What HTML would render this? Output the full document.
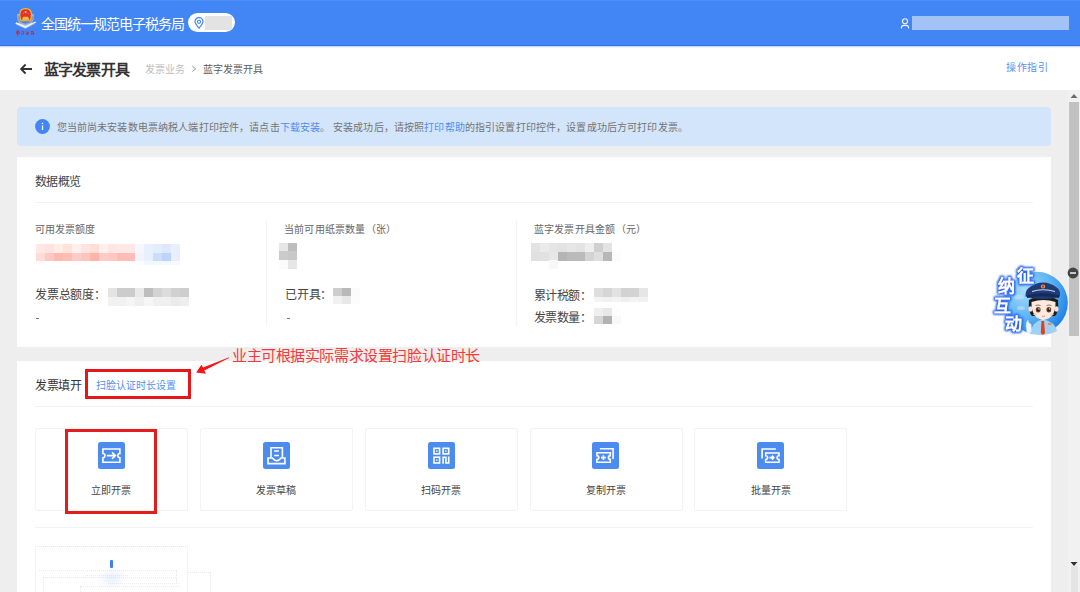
<!DOCTYPE html>
<html lang="zh-CN"><head><meta charset="utf-8">
<style>
*{margin:0;padding:0;box-sizing:border-box}
html,body{width:1080px;height:592px;overflow:hidden;background:#eeeeee;font-family:"Liberation Sans",sans-serif;color:#333}
.abs{position:absolute}
.t{position:absolute;white-space:nowrap;line-height:1}
#hdr{position:absolute;left:0;top:0;width:1080px;height:46px;background:#4285f4;border-bottom:1px solid #2e75ec}
#hdr:before{content:"";position:absolute;left:0;top:0;width:100%;height:1px;background:#4f8df5}
#bar{position:absolute;left:0;top:46px;width:1080px;height:44px;background:#fff}
#sb{position:absolute;left:1068px;top:90px;width:12px;height:502px;background:#f1f1f1}
#thumb{position:absolute;left:1069px;top:102px;width:10px;height:234px;background:#c1c1c1}
.card{position:absolute;background:#fff}
.notice{position:absolute;left:17px;top:107px;width:1034px;height:39px;background:#d3e5fa;border-radius:4px}
.hr{position:absolute;height:1px;background:#f2f2f2}
.vr{position:absolute;width:1px;background:#f4f4f4}
.tile{position:absolute;top:428px;width:153px;height:83px;border:1px solid #f2f3f5;border-radius:2px;background:#fff}
.ico{position:absolute;left:63px;top:14px;width:27px;height:27px;border-radius:3px;background:#4d8cf5}
.tl{position:absolute;left:0;width:100%;top:57px;text-align:center;font-size:10px;color:#333;line-height:1}
.mos{position:absolute}
.mos i{position:absolute;display:block}
</style></head><body>
<!-- header -->
<div id="hdr"></div>
<div id="bar"></div>
<div class="abs" style="left:0;top:46px;width:1080px;height:1px;background:#c6d8fa"></div><div class="abs" style="left:0;top:47px;width:1080px;height:1px;background:#f1f5fe"></div>
<svg class="abs" style="left:0;top:0" width="40" height="40" viewBox="0 0 40 40">
  <path d="M17.2 13.5 Q16.2 21.5 21 24.5 L25.5 25.8 L30 24.5 Q34.8 21.5 33.8 13.5 L31.8 14.2 Q32.4 20.4 29 22.8 L25.5 23.8 L22 22.8 Q18.6 20.4 19.2 14.2 Z" fill="#aab0bb"/>
  <path d="M18 16 Q18.5 20 21 22.5 M33 16 Q32.5 20 30 22.5" stroke="#7c838f" stroke-width="0.6" fill="none"/>
  <path d="M19.3 14.3 Q19.3 8 25.6 8 Q31.9 8 31.9 14.3 Q31.9 18.8 30.6 21.2 L20.6 21.2 Q19.3 18.8 19.3 14.3 Z" fill="#efbd3a"/>
  <path d="M20.4 14.3 Q20.4 9.3 25.6 9.3 Q30.8 9.3 30.8 14.3 Q30.8 18 29.8 20.2 L21.4 20.2 Q20.4 18 20.4 14.3 Z" fill="#e2332b"/>
  <path d="M22.3 20.2 L22.3 18.2 L23.6 16.8 L27.6 16.8 L28.9 18.2 L28.9 20.2 Z" fill="#f0c04a"/>
  <rect x="21.4" y="19.6" width="8.4" height="1" fill="#e9a93a"/>
  <circle cx="25.6" cy="12" r="1" fill="#f4cf55"/>
  <circle cx="23.2" cy="13.3" r="0.45" fill="#f4cf55"/><circle cx="28" cy="13.3" r="0.45" fill="#f4cf55"/>
  <path d="M15.3 23.8 L25.4 28.2 L36.3 22.3 L35.4 21.4 L25.4 25.8 L16.4 22.2 Z" fill="#eef1f7"/>
  <path d="M16.6 24.4 L25.4 28.4 L35.2 23.4" stroke="#c5ccd8" stroke-width="0.6" fill="none"/>
  <path d="M17.9 29.8 L17.9 36 M16.6 31.6 L19.3 31.6 L19.3 33.4 L16.6 33.4 Z" stroke="#c9232b" stroke-width="0.8" fill="none"/>
  <path d="M21.5 31.5 Q22.5 31 23.5 31.6 L23.6 34.6 M21.8 32.6 L21.6 35" stroke="#c9232b" stroke-width="0.7" fill="none"/>
  <path d="M25.8 31.2 L26.5 34.8 M27.6 31.3 L27.4 35 M28.6 32 L28.7 34.4" stroke="#c9232b" stroke-width="0.7"/>
  <path d="M30.5 31.6 L33.8 31.4 M31 33.6 L34 33.4 M32 31 L31.8 35 M33.5 32 L33.6 35" stroke="#c9232b" stroke-width="0.7"/>
</svg>
<div class="t" style="left:40.5px;top:16.5px;font-size:14px;letter-spacing:-1px;color:#fff">全国统一规范电子税务局</div>
<div class="abs" style="left:188px;top:12.5px;width:47px;height:19.5px;border-radius:10px;background:#fff"></div>
<svg class="abs" style="left:194px;top:17px" width="10" height="12" viewBox="0 0 10 12">
  <path d="M5 11.2 C2.2 8 1 6.2 1 4.6 A4 4 0 0 1 9 4.6 C9 6.2 7.8 8 5 11.2 Z" fill="none" stroke="#4285f4" stroke-width="1.2"/>
  <circle cx="5" cy="4.8" r="1.6" fill="none" stroke="#4285f4" stroke-width="1.1"/>
</svg>
<div class="abs" style="left:205px;top:16px;width:26.5px;height:14px;background:#e3e3e3"></div>
<svg class="abs" style="left:900px;top:18px" width="10" height="11" viewBox="0 0 10 11">
  <circle cx="5" cy="3.3" r="2.5" fill="none" stroke="#f4f8ff" stroke-width="1.1"/>
  <path d="M1.4 10.6 V9.8 Q1.4 7.4 4 7.4 H6 Q8.6 7.4 8.6 9.8 V10.6" fill="none" stroke="#f4f8ff" stroke-width="1.1"/>
</svg>
<div class="abs" style="left:912.2px;top:16px;width:156.8px;height:14px;background:#a3c2f6"></div>
<!-- second bar -->
<svg class="abs" style="left:19px;top:62.6px" width="14" height="12" viewBox="0 0 14 12">
  <path d="M13 6 H2.2 M6.6 1.5 L2.1 6 L6.6 10.5" fill="none" stroke="#333" stroke-width="1.8"/>
</svg>
<div class="t" style="left:43.5px;top:61.5px;font-size:15px;font-weight:bold;color:#333;letter-spacing:-0.75px">蓝字发票开具</div>
<div class="t" style="left:145px;top:64.5px;font-size:10px;color:#bdbdbd">发票业务</div>
<svg class="abs" style="left:191px;top:64px" width="6" height="9" viewBox="0 0 6 9"><path d="M1.3 2.1 L4.6 4.85 L1.3 7.6" fill="none" stroke="#999" stroke-width="1"/></svg>
<div class="t" style="left:202.5px;top:64.5px;font-size:10px;color:#5c5c5c">蓝字发票开具</div>
<div class="t" style="left:1006px;top:63px;font-size:10px;letter-spacing:0.6px;color:#5a90ee">操作指引</div>
<div id="sb"></div>
<div id="thumb"></div>
<svg class="abs" style="left:1070px;top:93px" width="8" height="6" viewBox="0 0 8 6"><path d="M0.5 5 L4 1 L7.5 5 Z" fill="#6b6b6b"/></svg>
<svg class="abs" style="left:1070px;top:561px" width="8" height="6" viewBox="0 0 8 6"><path d="M0.5 1 L4 5 L7.5 1 Z" fill="#333"/></svg>
<div class="abs" style="left:1071px;top:566px;width:7px;height:26px;background:#e4e4e4"></div>

<!-- notice -->
<div class="notice"></div>
<svg class="abs" style="left:35.1px;top:119px" width="15" height="15" viewBox="0 0 15 15"><circle cx="7.5" cy="7.5" r="7.4" fill="#4285f4"/><rect x="6.85" y="6.4" width="1.35" height="4.6" fill="#f2f6fe"/><rect x="6.85" y="3.8" width="1.35" height="1.3" fill="#f2f6fe"/></svg>
<div class="t" style="left:56.5px;top:123px;font-size:10px;letter-spacing:0.145px;color:#747474">您当前尚未安装数电票纳税人端打印控件，请点击<span style="color:#4d8df2">下载安装</span>。<span style="display:inline-block;width:2.5px"></span>安装成功后，请按照<span style="color:#4d8df2">打印帮助</span>的指引设置打印控件，设置成功后方可打印发票。</div>
<div class="card" style="left:17px;top:157px;width:1034px;height:190px"></div>
<div class="t" style="left:34.5px;top:175.5px;font-size:12px;letter-spacing:-0.4px;color:#444">数据概览</div>
<div class="hr" style="left:35px;top:202px;width:998px"></div>
<div class="vr" style="left:266px;top:220px;height:106px"></div>
<div class="vr" style="left:516px;top:220px;height:106px"></div>
<div class="t" style="left:34.5px;top:224.5px;font-size:10px;color:#666">可用发票额度</div>
<div class="t" style="left:284px;top:224.5px;font-size:10px;letter-spacing:0.2px;color:#666">当前可用纸票数量（张）</div>
<div class="t" style="left:533.5px;top:224.5px;font-size:10px;letter-spacing:0.25px;color:#666">蓝字发票开具金额（元）</div>
<div class="t" style="left:35px;top:289px;font-size:12px;letter-spacing:-0.2px;color:#444">发票总额度：</div>
<div class="t" style="left:285px;top:289px;font-size:12px;letter-spacing:-0.2px;color:#444">已开具：</div>
<div class="t" style="left:533.8px;top:289.5px;font-size:12px;letter-spacing:-0.5px;color:#444">累计税额：</div>
<div class="t" style="left:533.8px;top:311.5px;font-size:12px;letter-spacing:-0.5px;color:#444">发票数量：</div>
<div class="abs" style="left:35.5px;top:317.5px;width:3px;height:1px;background:#777"></div>
<div class="abs" style="left:286.5px;top:317.5px;width:3px;height:1px;background:#777"></div>
<div class="mos" style="left:36px;top:244px"><i style="left:0px;top:0.0px;width:9.3px;height:8.8px;background:#ffe8e4"></i><i style="left:9px;top:0.0px;width:9.3px;height:8.8px;background:#ffe3de"></i><i style="left:18px;top:0.0px;width:9.3px;height:8.8px;background:#ffede6"></i><i style="left:27px;top:0.0px;width:9.3px;height:8.8px;background:#ffe2dc"></i><i style="left:36px;top:0.0px;width:9.3px;height:8.8px;background:#fff0ee"></i><i style="left:45px;top:0.0px;width:9.3px;height:8.8px;background:#ffe3e0"></i><i style="left:54px;top:0.0px;width:9.3px;height:8.8px;background:#ffdeda"></i><i style="left:63px;top:0.0px;width:9.3px;height:8.8px;background:#fff0ee"></i><i style="left:72px;top:0.0px;width:9.3px;height:8.8px;background:#ffe6e4"></i><i style="left:81px;top:0.0px;width:9.3px;height:8.8px;background:#ffe9e6"></i><i style="left:90px;top:0.0px;width:9.3px;height:8.8px;background:#ffe9e6"></i><i style="left:99px;top:0.0px;width:9.3px;height:8.8px;background:#f4f7fe"></i><i style="left:108px;top:0.0px;width:9.3px;height:8.8px;background:#e8f0fd"></i><i style="left:117px;top:0.0px;width:9.3px;height:8.8px;background:#e5edfc"></i><i style="left:126px;top:0.0px;width:9.3px;height:8.8px;background:#dde8fc"></i><i style="left:135px;top:0.0px;width:9.3px;height:8.8px;background:#e9f0fd"></i><i style="left:0px;top:8.5px;width:9.3px;height:8.8px;background:#ffddd7"></i><i style="left:9px;top:8.5px;width:9.3px;height:8.8px;background:#ffc9c1"></i><i style="left:18px;top:8.5px;width:9.3px;height:8.8px;background:#ffb9b0"></i><i style="left:27px;top:8.5px;width:9.3px;height:8.8px;background:#ffbfb7"></i><i style="left:36px;top:8.5px;width:9.3px;height:8.8px;background:#ffccc5"></i><i style="left:45px;top:8.5px;width:9.3px;height:8.8px;background:#ffc4bd"></i><i style="left:54px;top:8.5px;width:9.3px;height:8.8px;background:#ffb3a9"></i><i style="left:63px;top:8.5px;width:9.3px;height:8.8px;background:#ffcbc4"></i><i style="left:72px;top:8.5px;width:9.3px;height:8.8px;background:#ffc8c2"></i><i style="left:81px;top:8.5px;width:9.3px;height:8.8px;background:#ffbcb5"></i><i style="left:90px;top:8.5px;width:9.3px;height:8.8px;background:#ffbdb7"></i><i style="left:99px;top:8.5px;width:9.3px;height:8.8px;background:#f1f3fe"></i><i style="left:108px;top:8.5px;width:9.3px;height:8.8px;background:#e8f0fd"></i><i style="left:117px;top:8.5px;width:9.3px;height:8.8px;background:#ccddfb"></i><i style="left:126px;top:8.5px;width:9.3px;height:8.8px;background:#bdd3fc"></i><i style="left:135px;top:8.5px;width:9.3px;height:8.8px;background:#e7effd"></i><i style="left:0px;top:17px;width:9.3px;height:4px;background:#fdfbfb"></i><i style="left:9px;top:17px;width:9.3px;height:4px;background:#ffffff"></i><i style="left:18px;top:17px;width:9.3px;height:4px;background:#ffffff"></i><i style="left:27px;top:17px;width:9.3px;height:4px;background:#ffffff"></i><i style="left:36px;top:17px;width:9.3px;height:4px;background:#fdfbfb"></i><i style="left:45px;top:17px;width:9.3px;height:4px;background:#ffffff"></i><i style="left:54px;top:17px;width:9.3px;height:4px;background:#ffffff"></i><i style="left:63px;top:17px;width:9.3px;height:4px;background:#ffffff"></i><i style="left:72px;top:17px;width:9.3px;height:4px;background:#ffffff"></i><i style="left:81px;top:17px;width:9.3px;height:4px;background:#ffffff"></i><i style="left:90px;top:17px;width:9.3px;height:4px;background:#ffffff"></i><i style="left:99px;top:17px;width:9.3px;height:4px;background:#fbfcff"></i><i style="left:108px;top:17px;width:9.3px;height:4px;background:#f3f7fe"></i><i style="left:117px;top:17px;width:9.3px;height:4px;background:#f3f7fe"></i><i style="left:126px;top:17px;width:9.3px;height:4px;background:#f3f7fe"></i><i style="left:135px;top:17px;width:9.3px;height:4px;background:#f6f9fe"></i></div>
<div class="mos" style="left:108px;top:288px"><i style="left:0.0px;top:0.0px;width:9.24px;height:9.100000000000001px;background:#e3e3e3"></i><i style="left:8.94px;top:0.0px;width:9.24px;height:9.100000000000001px;background:#cccccc"></i><i style="left:17.88px;top:0.0px;width:9.24px;height:9.100000000000001px;background:#cccccc"></i><i style="left:26.82px;top:0.0px;width:9.24px;height:9.100000000000001px;background:#e9e9e9"></i><i style="left:35.76px;top:0.0px;width:9.24px;height:9.100000000000001px;background:#bebebe"></i><i style="left:44.7px;top:0.0px;width:9.24px;height:9.100000000000001px;background:#d3d3d3"></i><i style="left:53.64px;top:0.0px;width:9.24px;height:9.100000000000001px;background:#dcdcdc"></i><i style="left:62.58px;top:0.0px;width:9.24px;height:9.100000000000001px;background:#d0d0d0"></i><i style="left:71.52px;top:0.0px;width:9.24px;height:9.100000000000001px;background:#cdcdcd"></i><i style="left:0.0px;top:8.8px;width:9.24px;height:9.100000000000001px;background:#f1f1f1"></i><i style="left:8.94px;top:8.8px;width:9.24px;height:9.100000000000001px;background:#f1f1f1"></i><i style="left:17.88px;top:8.8px;width:9.24px;height:9.100000000000001px;background:#f5f5f5"></i><i style="left:26.82px;top:8.8px;width:9.24px;height:9.100000000000001px;background:#efefef"></i><i style="left:35.76px;top:8.8px;width:9.24px;height:9.100000000000001px;background:#f6f6f6"></i><i style="left:44.7px;top:8.8px;width:9.24px;height:9.100000000000001px;background:#f0f0f0"></i><i style="left:53.64px;top:8.8px;width:9.24px;height:9.100000000000001px;background:#f0f0f0"></i><i style="left:62.58px;top:8.8px;width:9.24px;height:9.100000000000001px;background:#ebebeb"></i><i style="left:71.52px;top:8.8px;width:9.24px;height:9.100000000000001px;background:#eeeeee"></i></div>
<div class="mos" style="left:279px;top:242.7px"><i style="left:0px;top:0.0px;width:9.3px;height:9.0px;background:#e6e6e6"></i><i style="left:9px;top:0.0px;width:9.3px;height:9.0px;background:#bdbdbd"></i><i style="left:0px;top:8.7px;width:9.3px;height:9.0px;background:#cbcbcb"></i><i style="left:9px;top:8.7px;width:9.3px;height:9.0px;background:#c8c8c8"></i><i style="left:0px;top:17.4px;width:9.3px;height:9.0px;background:#fbfbfb"></i><i style="left:9px;top:17.4px;width:9.3px;height:9.0px;background:#e6e6e6"></i></div>
<div class="mos" style="left:333px;top:288px"><i style="left:0.0px;top:0px;width:9.100000000000001px;height:8.3px;background:#cdcdcd"></i><i style="left:8.8px;top:0px;width:9.100000000000001px;height:8.3px;background:#b9b9b9"></i><i style="left:17.6px;top:0px;width:9.100000000000001px;height:8.3px;background:#fbfbfb"></i><i style="left:0.0px;top:8px;width:9.100000000000001px;height:8.3px;background:#f1f1f1"></i><i style="left:8.8px;top:8px;width:9.100000000000001px;height:8.3px;background:#e8e8e8"></i><i style="left:17.6px;top:8px;width:9.100000000000001px;height:8.3px;background:#fcfcfc"></i></div>
<div class="mos" style="left:531px;top:243.1px"><i style="left:0px;top:0.0px;width:9.3px;height:9.0px;background:#e3e3e3"></i><i style="left:9px;top:0.0px;width:9.3px;height:9.0px;background:#eaeaea"></i><i style="left:18px;top:0.0px;width:9.3px;height:9.0px;background:#e5e5e5"></i><i style="left:27px;top:0.0px;width:9.3px;height:9.0px;background:#e2e2e2"></i><i style="left:36px;top:0.0px;width:9.3px;height:9.0px;background:#e6e6e6"></i><i style="left:45px;top:0.0px;width:9.3px;height:9.0px;background:#e3e3e3"></i><i style="left:54px;top:0.0px;width:9.3px;height:9.0px;background:#eeeeee"></i><i style="left:63px;top:0.0px;width:9.3px;height:9.0px;background:#d0d0d0"></i><i style="left:72px;top:0.0px;width:9.3px;height:9.0px;background:#e3e3e3"></i><i style="left:0px;top:8.7px;width:9.3px;height:9.0px;background:#e0e0e0"></i><i style="left:9px;top:8.7px;width:9.3px;height:9.0px;background:#e1e1e1"></i><i style="left:18px;top:8.7px;width:9.3px;height:9.0px;background:#e7e7e7"></i><i style="left:27px;top:8.7px;width:9.3px;height:9.0px;background:#b5b5b5"></i><i style="left:36px;top:8.7px;width:9.3px;height:9.0px;background:#bababa"></i><i style="left:45px;top:8.7px;width:9.3px;height:9.0px;background:#bbbbbb"></i><i style="left:54px;top:8.7px;width:9.3px;height:9.0px;background:#d3d3d3"></i><i style="left:63px;top:8.7px;width:9.3px;height:9.0px;background:#dedede"></i><i style="left:72px;top:8.7px;width:9.3px;height:9.0px;background:#b7b7b7"></i><i style="left:81px;top:8.7px;width:9.3px;height:9.0px;background:#fcfcfc"></i><i style="left:18px;top:17.4px;width:9.3px;height:9.0px;background:#f8f8f8"></i></div>
<div class="mos" style="left:594px;top:288px"><i style="left:0px;top:0px;width:9.3px;height:9.3px;background:#dedede"></i><i style="left:9px;top:0px;width:9.3px;height:9.3px;background:#d6d6d6"></i><i style="left:18px;top:0px;width:9.3px;height:9.3px;background:#e2e2e2"></i><i style="left:27px;top:0px;width:9.3px;height:9.3px;background:#d2d2d2"></i><i style="left:36px;top:0px;width:9.3px;height:9.3px;background:#d3d3d3"></i><i style="left:45px;top:0px;width:9.3px;height:9.3px;background:#e6e6e6"></i></div>
<div class="mos" style="left:594px;top:297px"><i style="left:0px;top:0px;width:9.3px;height:5.3px;background:#f3f3f3"></i><i style="left:9px;top:0px;width:9.3px;height:5.3px;background:#f1f1f1"></i><i style="left:18px;top:0px;width:9.3px;height:5.3px;background:#f3f3f3"></i><i style="left:27px;top:0px;width:9.3px;height:5.3px;background:#efefef"></i><i style="left:36px;top:0px;width:9.3px;height:5.3px;background:#f3f3f3"></i><i style="left:45px;top:0px;width:9.3px;height:5.3px;background:#f1f1f1"></i></div>
<div class="mos" style="left:594px;top:308.2px"><i style="left:0px;top:0.0px;width:9.3px;height:8.1px;background:#efefef"></i><i style="left:9px;top:0.0px;width:9.3px;height:8.1px;background:#e8e8e8"></i><i style="left:18px;top:0.0px;width:9.3px;height:8.1px;background:#fdfdfd"></i><i style="left:0px;top:7.8px;width:9.3px;height:8.1px;background:#d6d6d6"></i><i style="left:9px;top:7.8px;width:9.3px;height:8.1px;background:#b3b3b3"></i><i style="left:18px;top:7.8px;width:9.3px;height:8.1px;background:#f8f8f8"></i></div>
<div class="card" style="left:17px;top:361px;width:1034px;height:231px"></div>
<div class="t" style="left:35px;top:380px;font-size:12px;letter-spacing:-0.5px;color:#333">发票填开</div>
<div class="t" style="left:96px;top:380.5px;font-size:10px;color:#5591f0">扫脸认证时长设置</div>
<div class="abs" style="left:85px;top:368.5px;width:106px;height:30.5px;border:3px solid #e6161b"></div>
<div class="hr" style="left:35px;top:405.5px;width:998px"></div>
<div class="tile" style="left:34.5px"></div>
<div class="t" style="left:34.5px;width:153px;text-align:center;top:485.5px;font-size:10px;color:#444">立即开票</div>
<div class="tile" style="left:199.5px"></div>
<div class="t" style="left:199.5px;width:153px;text-align:center;top:485.5px;font-size:10px;color:#444">发票草稿</div>
<div class="tile" style="left:364.5px"></div>
<div class="t" style="left:364.5px;width:153px;text-align:center;top:485.5px;font-size:10px;color:#444">扫码开票</div>
<div class="tile" style="left:529.5px"></div>
<div class="t" style="left:529.5px;width:153px;text-align:center;top:485.5px;font-size:10px;color:#444">复制开票</div>
<div class="tile" style="left:694px"></div>
<div class="t" style="left:694px;width:153px;text-align:center;top:485.5px;font-size:10px;color:#444">批量开票</div>
<svg class="abs" style="left:98px;top:442px" width="27" height="27" viewBox="0 0 27 27"><rect width="27" height="27" rx="2.5" fill="#4c8cee"/><path d="M4.9 7 H21.9 V11.5 A2.1 2.1 0 0 0 21.9 15.7 V20.2 H4.9 V15.7 A2.1 2.1 0 0 0 4.9 11.5 Z" fill="none" stroke="#fff" stroke-width="1.6" stroke-linejoin="miter"/><path d="M8.8 13.6 H17.4 M14 10.4 L17.4 13.6 L14 16.8" fill="none" stroke="#fff" stroke-width="1.6" stroke-linejoin="miter"/></svg>
<svg class="abs" style="left:262.7px;top:442px" width="27" height="27" viewBox="0 0 27 27"><rect width="27" height="27" rx="2.5" fill="#4c8cee"/><path d="M8 15.5 V5.8 H19.4 V15.5" fill="none" stroke="#fff" stroke-width="1.6" stroke-linejoin="miter"/><path d="M11.2 9 H15.9 M11.2 13.5 H15.9" fill="none" stroke="#fff" stroke-width="1.6" stroke-linejoin="miter"/><path d="M5 16 H9.3 Q13.7 21.5 18.1 16 H21.9 V21.6 H5 Z" fill="none" stroke="#fff" stroke-width="1.6" stroke-linejoin="miter"/></svg>
<svg class="abs" style="left:427.6px;top:442px" width="27" height="27" viewBox="0 0 27 27"><rect width="27" height="27" rx="2.5" fill="#4c8cee"/><rect x="6" y="6.3" width="5.6" height="5.6" fill="none" stroke="#fff" stroke-width="1.6" stroke-linejoin="miter"/><rect x="15.1" y="6.3" width="5.6" height="5.6" fill="none" stroke="#fff" stroke-width="1.6" stroke-linejoin="miter"/><rect x="6" y="15.2" width="5.6" height="5.8" fill="none" stroke="#fff" stroke-width="1.6" stroke-linejoin="miter"/><rect x="8.1" y="8.4" width="1.4" height="1.4" fill="#fff"/><rect x="17.2" y="8.4" width="1.4" height="1.4" fill="#fff"/><rect x="8.1" y="17.4" width="1.4" height="1.4" fill="#fff"/><path d="M15.1 21.8 V15.2 H17.9 V21 H20.7 V14.6" fill="none" stroke="#fff" stroke-width="1.6" stroke-linejoin="miter"/></svg>
<svg class="abs" style="left:592.4px;top:442px" width="27" height="27" viewBox="0 0 27 27"><rect width="27" height="27" rx="2.5" fill="#4c8cee"/><path d="M7.9 6.8 H21.1 V17.1" fill="none" stroke="#fff" stroke-width="1.6" stroke-linejoin="miter"/><path d="M4.9 10.8 H18.3 V13.6 A1.9 1.9 0 0 0 18.3 17.4 V20.2 H4.9 V17.4 A1.9 1.9 0 0 0 4.9 13.6 Z" fill="none" stroke="#fff" stroke-width="1.6" stroke-linejoin="miter"/><path d="M11.4 13.2 V18 M9 15.6 H13.8" fill="none" stroke="#fff" stroke-width="1.6" stroke-linejoin="miter"/></svg>
<svg class="abs" style="left:757.1px;top:442px" width="27" height="27" viewBox="0 0 27 27"><rect width="27" height="27" rx="2.5" fill="#4c8cee"/><path d="M5.1 16.5 V7 H18.9" fill="none" stroke="#fff" stroke-width="1.6" stroke-linejoin="miter"/><path d="M8.7 11 H22 V13.7 A1.9 1.9 0 0 0 22 17.5 V20.2 H8.7 V17.5 A1.9 1.9 0 0 0 8.7 13.7 Z" fill="none" stroke="#fff" stroke-width="1.6" stroke-linejoin="miter"/><path d="M12.4 15.6 H16.8 M14.9 13.6 L16.8 15.6 L14.9 17.6" fill="none" stroke="#fff" stroke-width="1.6" stroke-linejoin="miter"/></svg>
<div class="hr" style="left:35px;top:527px;width:998px"></div>
<div class="abs" style="left:65px;top:429px;width:91.7px;height:85px;border:3px solid #e51c1c"></div>
<div class="t" style="left:232px;top:347.5px;font-size:15px;letter-spacing:-0.42px;color:#f8383a">业主可根据实际需求设置扫脸认证时长</div>
<svg class="abs" style="left:186px;top:350px" width="54" height="30" viewBox="186 350 54 30"><path d="M229.2 357.2 L203.0 367.6 L201.4 364.8 L196.2 372.4 L205.9 373.8 L204.3 370.4 L229.0 357.9 Z" fill="#f5161a"/></svg>
<!-- bottom dashed -->
<div class="abs" style="left:34.5px;top:545.5px;width:153.5px;height:60px;border:1px dotted #e6e6e6;border-radius:2px"></div>
<div class="abs" style="left:39px;top:569.5px;width:137px;height:0;border-top:1px dotted #e9e9e9"></div>
<div class="abs" style="left:43px;top:577px;width:133px;height:30px;border-left:1px dotted #e9e9e9;border-top:1px dotted #e9e9e9"></div>
<div class="abs" style="left:86px;top:574.5px;width:42px;height:0;border-top:1px dotted #ececec"></div>
<div class="abs" style="left:80px;top:585.5px;width:100px;height:20px;border-left:1px dotted #e9e9e9;border-top:1px dotted #e9e9e9"></div>
<div class="abs" style="left:176px;top:569.5px;width:0;height:12px;border-left:1px dotted #e6e6e6"></div>
<div class="abs" style="left:188px;top:571.5px;width:23px;height:30px;border-top:1px dotted #e9e9e9;border-right:1px dotted #e9e9e9"></div>
<div class="abs" style="left:108px;top:583px;width:71px;height:0;border-top:1px dotted #ececec"></div>
<div class="abs" style="left:96px;top:566px;width:32px;height:24px;border-radius:50%;background:radial-gradient(closest-side,rgba(200,210,250,0.35),rgba(255,255,255,0))"></div>
<div class="abs" style="left:110px;top:560px;width:3px;height:7.5px;border-radius:1px;background:#3f7ff0"></div>

<!-- mascot -->
<svg class="abs" style="left:985px;top:258px" width="95" height="82" viewBox="985 258 95 82">
  <defs>
    <radialGradient id="cg" cx="0.3" cy="0.3" r="0.8">
      <stop offset="0" stop-color="#a9dcfb"/>
      <stop offset="0.55" stop-color="#5db3f3"/>
      <stop offset="1" stop-color="#1b7ee6"/>
    </radialGradient>
    <filter id="glow" x="-50%" y="-50%" width="200%" height="200%">
      <feMorphology in="SourceAlpha" operator="dilate" radius="0.5" result="d"/>
      <feGaussianBlur in="d" stdDeviation="1.3" result="b"/>
      <feFlood flood-color="#2d6cf0"/>
      <feComposite in2="b" operator="in" result="c"/>
      <feMerge><feMergeNode in="c"/><feMergeNode in="c"/><feMergeNode in="SourceGraphic"/></feMerge>
    </filter>
  </defs>
  <circle cx="1036.8" cy="302.8" r="31" fill="url(#cg)"/>
  <ellipse cx="1019" cy="297" rx="5" ry="2.5" fill="#bfe3fb" opacity="0.6"/>
  <ellipse cx="1021" cy="308" rx="4" ry="2" fill="#bfe3fb" opacity="0.6"/>
  <!-- body -->
  <path d="M1030 334 Q1031 322 1043 319 Q1055 322 1057 331 Q1050 335 1040 335 Z" fill="#9fd0f5"/>
  <path d="M1041.5 321 L1044 321 L1045 333 L1042.8 335 L1040.8 333 Z" fill="#e2401c"/>
  <rect x="1048" y="323" width="3.5" height="2" fill="#f08a4a"/>
  <!-- hand -->
  <path d="M1027 333 L1026 326 Q1026 322 1028 320 L1029 323 L1031 324 Q1032 328 1031 333 Z" fill="#eef6fd" stroke="#bcd6ee" stroke-width="0.5"/>
  <!-- hair & face -->
  <path d="M1029 300 Q1028 312 1032 316 L1055 316 Q1059 312 1058 300 Q1043 292 1029 300 Z" fill="#1c1c1c"/>
  <path d="M1031.5 302 Q1031 318 1043.5 320 Q1056 318 1055.5 302 Q1043.5 298 1031.5 302 Z" fill="#fde9dd"/>
  <ellipse cx="1030.5" cy="309" rx="2" ry="2.8" fill="#fde0d0"/>
  <ellipse cx="1056.5" cy="309" rx="2" ry="2.8" fill="#fde0d0"/>
  <path d="M1035.5 305.5 Q1038 304.5 1040.5 305.5 M1046.5 305.5 Q1049 304.5 1051.5 305.5" stroke="#3a2a22" stroke-width="0.6" fill="none"/>
  <ellipse cx="1038.2" cy="309.8" rx="2.4" ry="2.7" fill="#6b3a22"/>
  <ellipse cx="1048.8" cy="309.8" rx="2.4" ry="2.7" fill="#6b3a22"/>
  <circle cx="1038.2" cy="310" r="1.2" fill="#2a150c"/>
  <circle cx="1048.8" cy="310" r="1.2" fill="#2a150c"/>
  <circle cx="1038.9" cy="308.9" r="0.7" fill="#fff"/>
  <circle cx="1049.5" cy="308.9" r="0.7" fill="#fff"/>
  <ellipse cx="1035" cy="314.3" rx="1.8" ry="0.9" fill="#f9c3b8"/>
  <ellipse cx="1052" cy="314.3" rx="1.8" ry="0.9" fill="#f9c3b8"/>
  <path d="M1042 316 Q1043.5 317.2 1045 316" stroke="#b55" stroke-width="0.6" fill="none"/>
  <!-- hat -->
  <path d="M1025.5 296.5 Q1025 290 1030 287 Q1036 282.5 1043 282.5 Q1050 282.5 1056 287 Q1061 290 1060 296.5 Q1052 299 1043 299 Q1034 299 1025.5 296.5 Z" fill="#1f3b78"/>
  <path d="M1027 295.5 Q1043 291 1059 295.5 L1059 298 Q1043 294.5 1027 298 Z" fill="#142a5c"/>
  <path d="M1032 291.5 Q1043 288 1055 291.5" stroke="#e8eef8" stroke-width="0.9" fill="none"/>
  <circle cx="1043" cy="286.5" r="2.1" fill="#f2b134"/>
  <circle cx="1043" cy="286.5" r="1.2" fill="#d9302a"/>
  <!-- text -->
  <g filter="url(#glow)" fill="#fff" font-size="17" font-weight="bold" font-family="Liberation Sans">
    <text x="1016.5" y="282">征</text>
    <text x="997.5" y="292">纳</text>
    <text x="994" y="311.5">互</text>
    <text x="1005" y="330">动</text>
  </g>
</svg>
<svg class="abs" style="left:1067px;top:267px" width="12" height="12" viewBox="0 0 12 12"><circle cx="6" cy="6" r="5.4" fill="#444"/><rect x="3" y="5.3" width="6" height="1.4" fill="#fff"/></svg>
</body></html>
